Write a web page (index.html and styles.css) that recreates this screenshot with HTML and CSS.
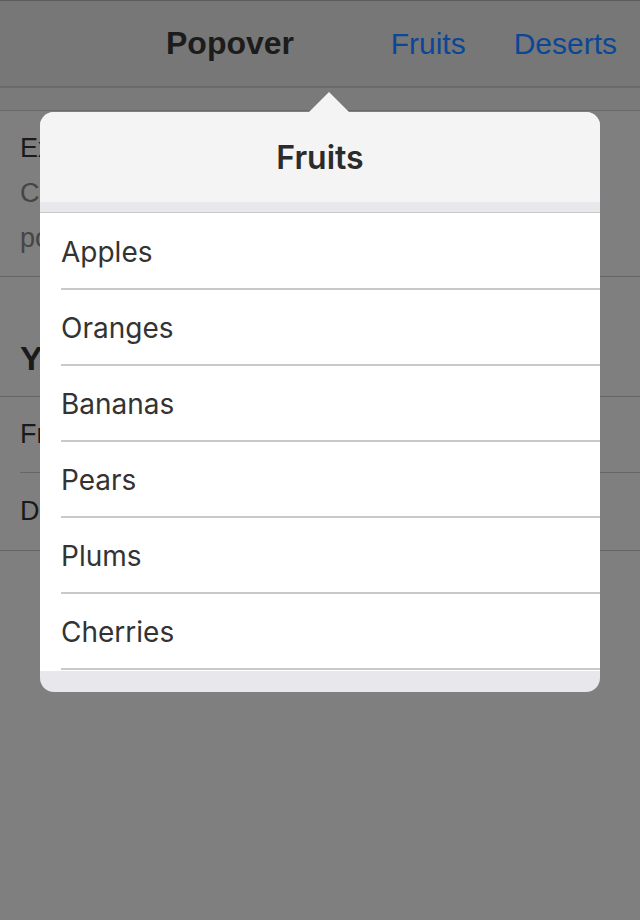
FILE: index.html
```html
<!DOCTYPE html>
<html lang="en">
<head>
<meta charset="utf-8">
<title>Popover</title>
<link rel="stylesheet" href="styles.css">
</head>
<body>
<div class="page">
  <header class="navbar">
    <div class="nav-title">Popover</div>
    <nav class="nav-buttons">
      <span class="nav-btn">Fruits</span>
      <span class="nav-btn">Deserts</span>
    </nav>
  </header>
  <div class="band"></div>
  <section class="intro">
    <div class="intro-title">Ex</div>
    <div class="intro-text">Cl</div>
    <div class="intro-text">po</div>
  </section>
  <h2 class="section-head">Yo</h2>
  <ul class="choices">
    <li class="choice"><span>Fr</span></li>
    <li class="choice"><span>De</span></li>
  </ul>
</div>

<div class="scrim">
  <div class="popover">
    <div class="pop-head">Fruits</div>
    <div class="pop-strip"></div>
    <ul class="pop-list">
      <li class="pop-item"><span>Apples</span></li>
      <li class="pop-item"><span>Oranges</span></li>
      <li class="pop-item"><span>Bananas</span></li>
      <li class="pop-item"><span>Pears</span></li>
      <li class="pop-item"><span>Plums</span></li>
      <li class="pop-item"><span>Cherries</span></li>
    </ul>
    <div class="pop-foot"></div>
  </div>
</div>
</body>
</html>
```

FILE: styles.css
```css
* { box-sizing: border-box; }

html, body {
  margin: 0;
  padding: 0;
  height: 100%;
}

body {
  background: #7f7f7f;
  font-family: "Liberation Sans", Arial, sans-serif;
  color: #1a1a1a;
  overflow: hidden;
}

.page {
  width: 640px;
}

.navbar {
  height: 88px;
  background: #777777;
  border-top: 1px solid #5c5c5c;
  border-bottom: 2px solid #6a6a6a;
  display: flex;
  align-items: center;
}

.nav-title {
  flex: 1;
  padding-left: 166px;
  font-size: 32px;
  font-weight: bold;
  color: #1c1c1c;
}

.nav-buttons {
  display: flex;
  gap: 48px;
  padding-right: 23px;
}

.nav-btn {
  font-size: 30px;
  color: #0c4796;
}

.band {
  height: 23px;
  background: #7a7a7a;
  border-bottom: 1px solid #696969;
}

.intro {
  padding: 15px 20px 15px;
  border-bottom: 1px solid #666666;
  font-size: 27px;
  line-height: 45px;
}

.intro-title { color: #1a1a1a; }
.intro-text { color: #454545; }

.section-head {
  margin: 0;
  height: 120px;
  padding: 0 20px 18px;
  display: flex;
  align-items: flex-end;
  font-size: 34px;
  font-weight: bold;
  color: #1a1a1a;
  border-bottom: 1px solid #666666;
}

.choices {
  list-style: none;
  margin: 0;
  padding: 0;
  border-bottom: 1px solid #666666;
}

.choice {
  padding-left: 20px;
  font-size: 27px;
  color: #1a1a1a;
}

.choice span {
  display: flex;
  align-items: center;
  height: 77px;
}

.choice:first-child span {
  border-bottom: 1px solid #666666;
  height: 76px;
}

/* scrim + popover */
.scrim {
  position: fixed;
  inset: 0;
}

.popover {
  position: absolute;
  left: 40px;
  top: 112px;
  width: 560px;
  height: 580px;
  border-radius: 14px;
  background: #e7e7ec;
  overflow: visible;
  font-family: Inter, "Noto Sans", sans-serif;
}

.popover::before {
  content: "";
  position: absolute;
  top: -20px;
  left: 269px;
  border-left: 20px solid transparent;
  border-right: 20px solid transparent;
  border-bottom: 20px solid #f4f4f4;
}

.pop-head {
  height: 90px;
  background: #f4f4f4;
  border-radius: 14px 14px 0 0;
  display: flex;
  align-items: center;
  justify-content: center;
  font-size: 32px;
  font-weight: 600;
  color: #2b2b2b;
}

.pop-strip {
  height: 10px;
  background: #e7e7ec;
  border-bottom: 1px solid #c8c8c8;
  box-sizing: content-box;
}

.pop-list {
  list-style: none;
  margin: 0;
  padding: 1px 0 0 21px;
  background: #ffffff;
}

.pop-item span {
  display: flex;
  align-items: center;
  height: 76px;
  padding-top: 2px;
  border-bottom: 2px solid #c9c9c9;
  font-size: 28px;
  color: #333333;
}

.pop-foot {
  height: 1px;
  background: #ffffff;
}
```
